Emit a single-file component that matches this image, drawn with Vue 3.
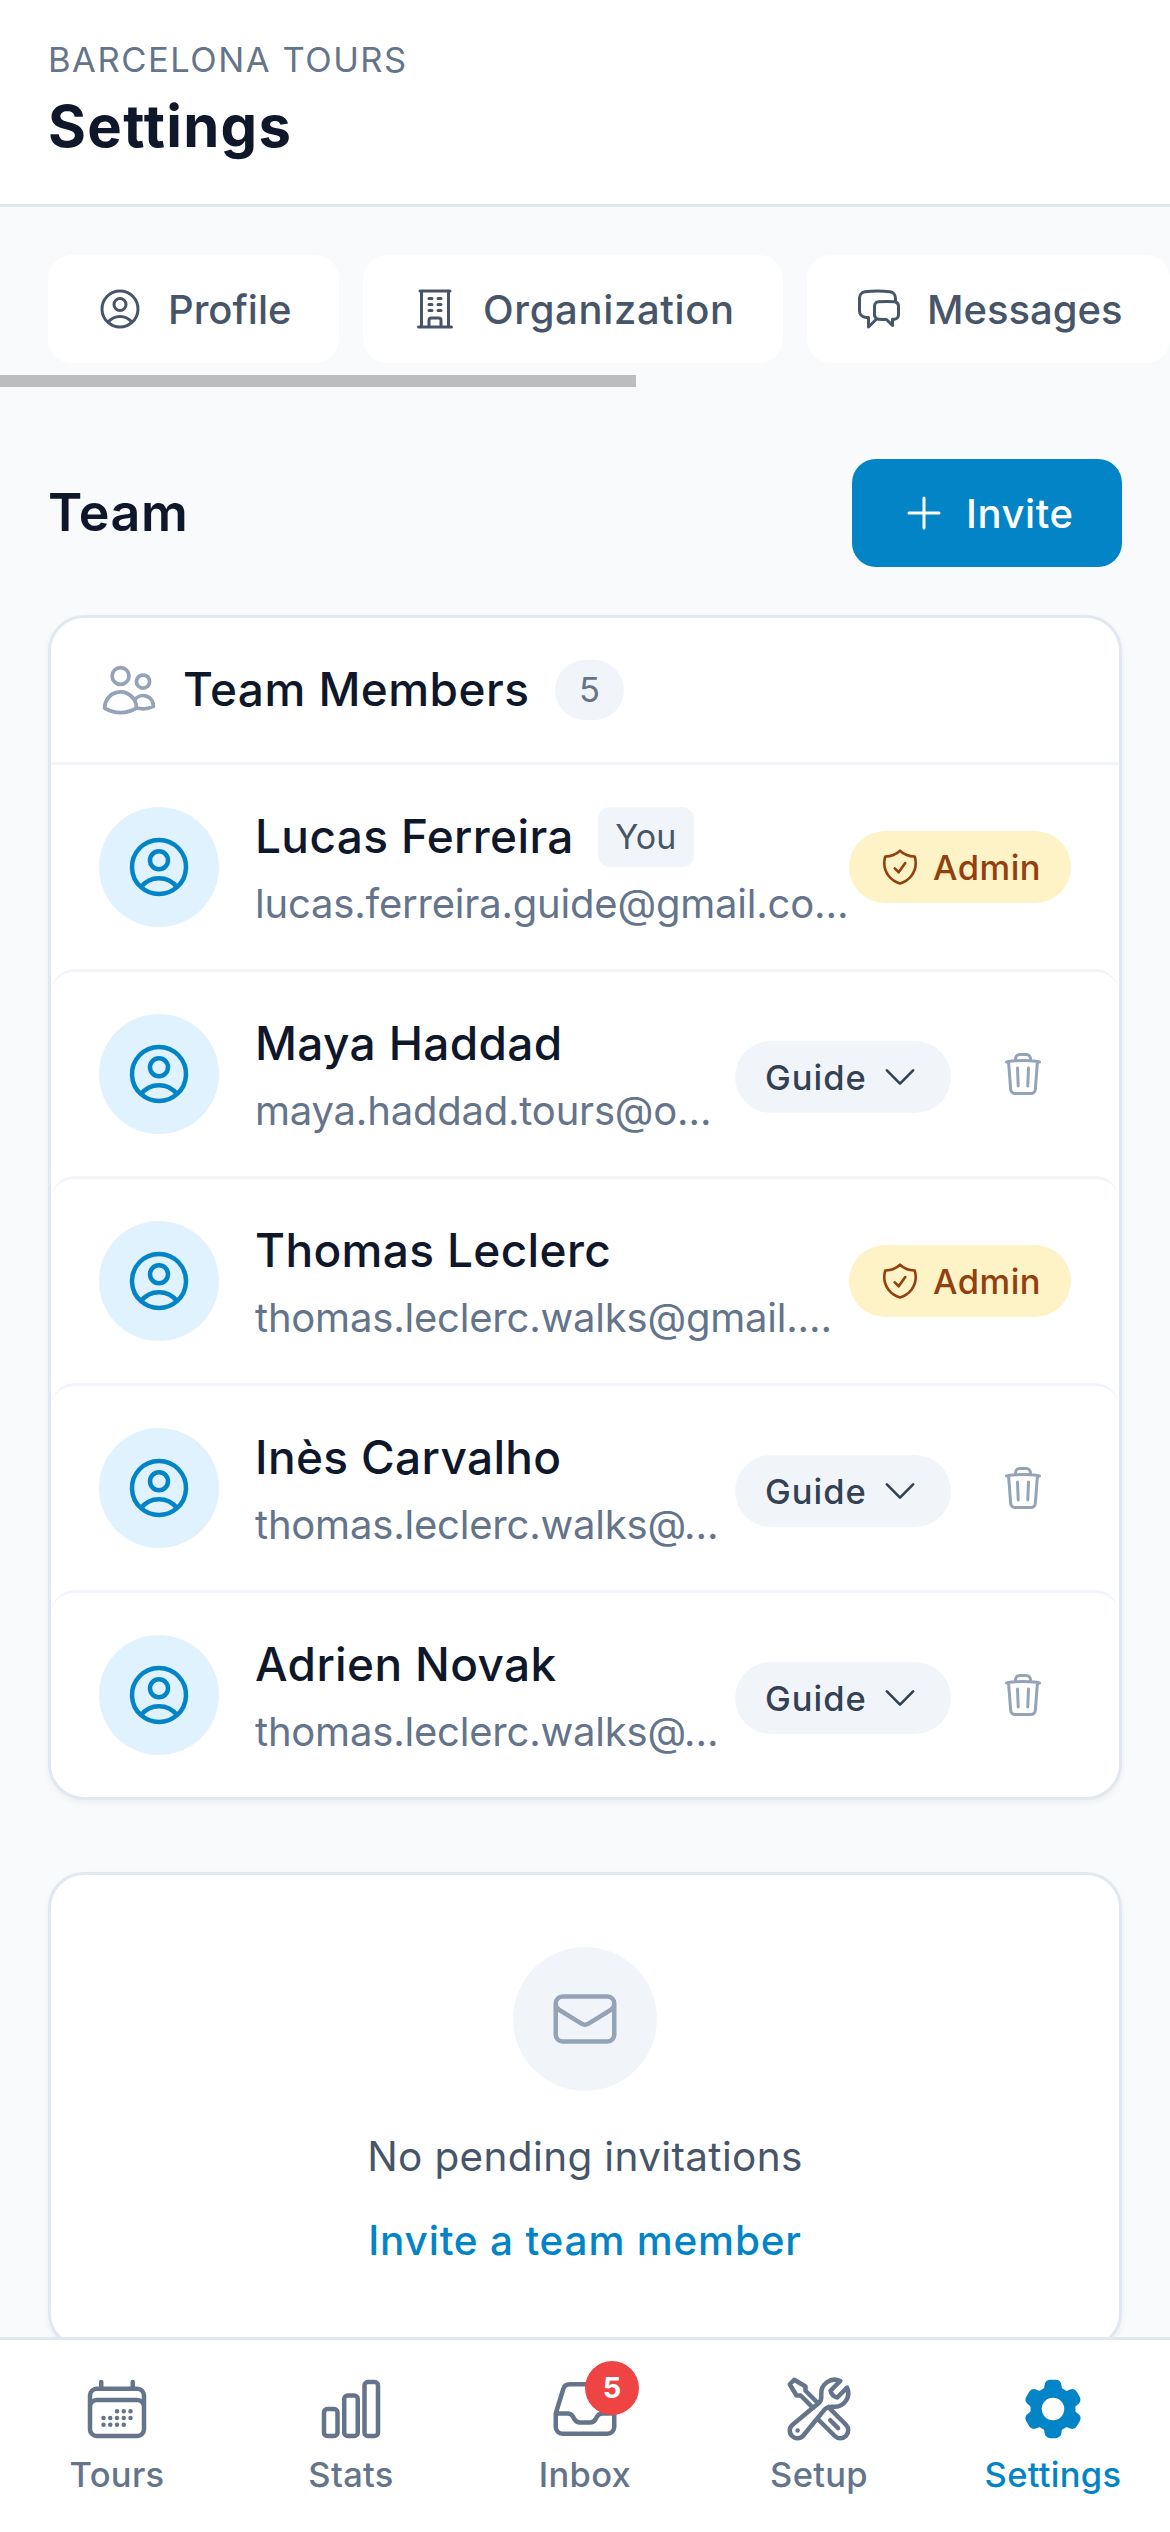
<script setup>
import { ref } from 'vue'

const icons = {
  user: 'M17.982 18.725A7.488 7.488 0 0 0 12 15.75a7.488 7.488 0 0 0-5.982 2.975m11.963 0a9 9 0 1 0-11.963 0m11.963 0A8.966 8.966 0 0 1 12 21a8.966 8.966 0 0 1-5.982-2.275M15 9.75a3 3 0 1 1-6 0 3 3 0 0 1 6 0Z',
  building: 'M3.75 21h16.5M4.5 3h15M5.25 3v18m13.5-18v18M9 6.75h1.5m-1.5 3h1.5m-1.5 3h1.5m3-6H15m-1.5 3H15m-1.5 3H15M9 21v-3.375c0-.621.504-1.125 1.125-1.125h3.75c.621 0 1.125.504 1.125 1.125V21',
  chat: 'M20.25 8.511c.884.284 1.5 1.128 1.5 2.097v4.286c0 1.136-.847 2.1-1.98 2.193-.34.027-.68.052-1.02.072v3.091l-3-3c-1.354 0-2.694-.055-4.02-.163a2.115 2.115 0 0 1-.825-.242m9.345-8.334a2.126 2.126 0 0 0-.476-.095 48.64 48.64 0 0 0-8.048 0c-1.131.094-1.976 1.057-1.976 2.192v4.286c0 .837.46 1.58 1.155 1.951m9.345-8.334V6.637c0-1.621-1.152-3.026-2.76-3.235A48.455 48.455 0 0 0 11.25 3c-2.115 0-4.198.137-6.24.402-1.608.209-2.76 1.614-2.76 3.235v6.226c0 1.621 1.152 3.026 2.76 3.235.577.075 1.157.14 1.74.194V21l4.155-4.155',
  plus: 'M12 4.5v15m7.5-7.5h-15',
  users: 'M15 19.128a9.38 9.38 0 0 0 2.625.372 9.337 9.337 0 0 0 4.121-.952 4.125 4.125 0 0 0-7.533-2.493M15 19.128v-.003c0-1.113-.285-2.16-.786-3.07M15 19.128v.106A12.318 12.318 0 0 1 8.624 21c-2.331 0-4.512-.645-6.374-1.766l-.001-.109a6.375 6.375 0 0 1 11.964-3.07M12 6.375a3.375 3.375 0 1 1-6.75 0 3.375 3.375 0 0 1 6.75 0Zm8.25 2.25a2.625 2.625 0 1 1-5.25 0 2.625 2.625 0 0 1 5.25 0Z',
  shield: 'M9 12.75 11.25 15 15 9.75m-3-7.036A11.959 11.959 0 0 1 3.598 6 11.99 11.99 0 0 0 3 9.749c0 5.592 3.824 10.29 9 11.623 5.176-1.332 9-6.03 9-11.622 0-1.31-.21-2.571-.598-3.751h-.152c-3.196 0-6.1-1.248-8.25-3.285Z',
  chevron: 'm19.5 8.25-7.5 7.5-7.5-7.5',
  trash: 'm14.74 9-.346 9m-4.788 0L9.26 9m9.968-3.21c.342.052.682.107 1.022.166m-1.022-.165L18.16 19.673a2.25 2.25 0 0 1-2.244 2.077H8.084a2.25 2.25 0 0 1-2.244-2.077L4.772 5.79m14.456 0a48.108 48.108 0 0 0-3.478-.397m-12 .562c.34-.059.68-.114 1.022-.165m0 0a48.11 48.11 0 0 1 3.478-.397m7.5 0v-.916c0-1.18-.91-2.164-2.09-2.201a51.964 51.964 0 0 0-3.32 0c-1.18.037-2.09 1.022-2.09 2.201v.916m7.5 0a48.667 48.667 0 0 0-7.5 0',
  envelope: 'M21.75 6.75v10.5a2.25 2.25 0 0 1-2.25 2.25h-15a2.25 2.25 0 0 1-2.25-2.25V6.75m19.5 0A2.25 2.25 0 0 0 19.5 4.5h-15a2.25 2.25 0 0 0-2.25 2.25m19.5 0v.243a2.25 2.25 0 0 1-1.07 1.916l-7.5 4.615a2.25 2.25 0 0 1-2.36 0L3.32 8.91a2.25 2.25 0 0 1-1.07-1.916V6.75',
  calendar: 'M6.75 3v2.25M17.25 3v2.25M3 18.75V7.5a2.25 2.25 0 0 1 2.25-2.25h13.5A2.25 2.25 0 0 1 21 7.5v11.25m-18 0A2.25 2.25 0 0 0 5.25 21h13.5A2.25 2.25 0 0 0 21 18.75m-18 0v-7.5A2.25 2.25 0 0 1 5.25 9h13.5A2.25 2.25 0 0 1 21 11.25v7.5m-9-6h.008v.008H12v-.008ZM12 15h.008v.008H12V15Zm0 2.25h.008v.008H12v-.008ZM9.75 15h.008v.008H9.75V15Zm0 2.25h.008v.008H9.75v-.008ZM7.5 15h.008v.008H7.5V15Zm0 2.25h.008v.008H7.5v-.008Zm6.75-4.5h.008v.008h-.008v-.008Zm0 2.25h.008v.008h-.008V15Zm0 2.25h.008v.008h-.008v-.008Zm2.25-4.5h.008v.008H16.5v-.008Zm0 2.25h.008v.008H16.5V15Z',
  chart: 'M3 13.125C3 12.504 3.504 12 4.125 12h2.25c.621 0 1.125.504 1.125 1.125v6.75C7.5 20.496 6.996 21 6.375 21h-2.25A1.125 1.125 0 0 1 3 19.875v-6.75ZM9.75 8.625c0-.621.504-1.125 1.125-1.125h2.25c.621 0 1.125.504 1.125 1.125v11.25c0 .621-.504 1.125-1.125 1.125h-2.25a1.125 1.125 0 0 1-1.125-1.125V8.625ZM16.5 4.125c0-.621.504-1.125 1.125-1.125h2.25C20.496 3 21 3.504 21 4.125v15.75c0 .621-.504 1.125-1.125 1.125h-2.25a1.125 1.125 0 0 1-1.125-1.125V4.125Z',
  inbox: 'M2.25 13.5h3.86a2.25 2.25 0 0 1 2.012 1.244l.256.512a2.25 2.25 0 0 0 2.013 1.244h3.218a2.25 2.25 0 0 0 2.013-1.244l.256-.512a2.25 2.25 0 0 1 2.013-1.244h3.859m-19.5.338V18a2.25 2.25 0 0 0 2.25 2.25h15A2.25 2.25 0 0 0 21.75 18v-4.162c0-.224-.034-.447-.1-.661L19.24 5.338a2.25 2.25 0 0 0-2.15-1.588H6.911a2.25 2.25 0 0 0-2.15 1.588L2.35 13.177a2.25 2.25 0 0 0-.1.661Z',
  tools: 'M11.42 15.17 17.25 21A2.652 2.652 0 0 0 21 17.25l-5.877-5.877M11.42 15.17l2.496-3.03c.317-.384.74-.626 1.208-.766M11.42 15.17l-4.655 5.653a2.548 2.548 0 1 1-3.586-3.586l6.837-5.63m5.108-.233c.55-.164 1.163-.188 1.743-.14a4.5 4.5 0 0 0 4.486-6.336l-3.276 3.277a3.004 3.004 0 0 1-2.25-2.25l3.276-3.276a4.5 4.5 0 0 0-6.336 4.486c.091 1.076-.071 2.264-.904 2.95l-.102.085m-1.745 1.437L5.909 7.5H4.5L2.25 3.75l1.5-1.5L7.5 4.5v1.409l4.26 4.26m-1.745 1.437 1.745-1.437m6.615 8.206L15.75 15.75M4.867 19.125h.008v.008h-.008v-.008Z',
  cog: 'M11.078 2.25c-.917 0-1.699.663-1.85 1.567L9.05 4.889c-.02.12-.115.26-.297.348a7.493 7.493 0 0 0-.986.57c-.166.115-.334.126-.45.083L6.3 5.508a1.875 1.875 0 0 0-2.282.819l-.922 1.597a1.875 1.875 0 0 0 .432 2.385l.84.692c.095.078.17.229.154.43a7.598 7.598 0 0 0 0 1.139c.015.2-.059.352-.153.43l-.841.692a1.875 1.875 0 0 0-.432 2.385l.922 1.597a1.875 1.875 0 0 0 2.282.818l1.019-.382c.115-.043.283-.031.45.082.312.214.641.405.985.57.182.088.277.228.297.35l.178 1.071c.151.904.933 1.567 1.85 1.567h1.844c.916 0 1.699-.663 1.85-1.567l.178-1.072c.02-.12.114-.26.297-.349.344-.165.673-.356.985-.57.167-.114.335-.125.45-.082l1.02.382a1.875 1.875 0 0 0 2.28-.819l.923-1.597a1.875 1.875 0 0 0-.432-2.385l-.84-.692c-.095-.078-.17-.229-.154-.43a7.614 7.614 0 0 0 0-1.139c-.016-.2.059-.352.153-.43l.84-.692c.708-.582.891-1.59.433-2.385l-.922-1.597a1.875 1.875 0 0 0-2.282-.818l-1.02.382c-.114.043-.282.031-.449-.083a7.49 7.49 0 0 0-.985-.57c-.183-.087-.277-.227-.297-.348l-.179-1.072a1.875 1.875 0 0 0-1.85-1.567h-1.843ZM12 15.75a3.75 3.75 0 1 0 0-7.5 3.75 3.75 0 0 0 0 7.5Z'
}

const tabs = [
  { label: 'Profile', icon: 'user' },
  { label: 'Organization', icon: 'building' },
  { label: 'Messages', icon: 'chat' }
]

const members = ref([
  { name: 'Lucas Ferreira', email: 'lucas.ferreira.guide@gmail.co…', role: 'Admin', you: true },
  { name: 'Maya Haddad', email: 'maya.haddad.tours@o…', role: 'Guide' },
  { name: 'Thomas Leclerc', email: 'thomas.leclerc.walks@gmail.…', role: 'Admin' },
  { name: 'Inès Carvalho', email: 'thomas.leclerc.walks@…', role: 'Guide' },
  { name: 'Adrien Novak', email: 'thomas.leclerc.walks@…', role: 'Guide' }
])

const nav = [
  { label: 'Tours', icon: 'calendar' },
  { label: 'Stats', icon: 'chart' },
  { label: 'Inbox', icon: 'inbox', count: 5 },
  { label: 'Setup', icon: 'tools' },
  { label: 'Settings', icon: 'cog', active: true }
]
</script>

<template>
  <div class="app">
    <header class="header">
      <div class="org">BARCELONA TOURS</div>
      <h1>Settings</h1>
    </header>

    <main class="main">
      <div class="tabs">
        <button v-for="tab in tabs" :key="tab.label" class="tab" :class="tab.icon">
          <svg class="icon" viewBox="0 0 24 24"><path :d="icons[tab.icon]" /></svg>
          <span>{{ tab.label }}</span>
        </button>
      </div>
      <div class="scrollbar"><div class="thumb"></div></div>

      <div class="title-row">
        <h2>Team</h2>
        <button class="invite">
          <svg class="icon" viewBox="0 0 24 24"><path :d="icons.plus" /></svg>
          <span>Invite</span>
        </button>
      </div>

      <section class="card">
        <div class="card-header">
          <svg class="icon" viewBox="0 0 24 24"><path :d="icons.users" /></svg>
          <h3>Team Members</h3>
          <span class="count">{{ members.length }}</span>
        </div>
        <div v-for="member in members" :key="member.name" class="member">
          <div class="avatar">
            <svg class="icon" viewBox="0 0 24 24"><path :d="icons.user" /></svg>
          </div>
          <div class="info">
            <div class="name">
              <span class="name-text">{{ member.name }}</span>
              <span v-if="member.you" class="you">You</span>
            </div>
            <div class="email">{{ member.email }}</div>
          </div>
          <div v-if="member.role === 'Admin'" class="role admin">
            <svg class="icon" viewBox="0 0 24 24"><path :d="icons.shield" /></svg>
            <span>Admin</span>
          </div>
          <template v-else>
            <button class="role guide">
              <span>Guide</span>
              <svg class="icon" viewBox="0 0 24 24"><path :d="icons.chevron" /></svg>
            </button>
            <button class="remove">
              <svg class="icon" viewBox="0 0 24 24"><path :d="icons.trash" /></svg>
            </button>
          </template>
        </div>
      </section>

      <section class="card pending">
        <div class="pending-icon">
          <svg class="icon" viewBox="0 0 24 24"><path :d="icons.envelope" /></svg>
        </div>
        <p>No pending invitations</p>
        <a>Invite a team member</a>
      </section>
    </main>

    <nav class="nav">
      <a v-for="item in nav" :key="item.label" class="nav-item" :class="{ active: item.active }">
        <div class="nav-icon">
          <svg class="icon" :class="{ solid: item.active }" viewBox="0 0 24 24">
            <path fill-rule="evenodd" :d="icons[item.icon]" />
          </svg>
          <span v-if="item.count" class="nav-badge">{{ item.count }}</span>
        </div>
        <span class="nav-label">{{ item.label }}</span>
      </a>
    </nav>
  </div>
</template>

<style>
body {
  margin: 0;
  background: #f8fafc;
}
</style>

<style scoped>
* {
  box-sizing: border-box;
}

.app {
  display: flex;
  flex-direction: column;
  width: 1170px;
  height: 2532px;
  overflow: hidden;
  background: #f8fafc;
  color: #0f172a;
  font-family: Inter, "Noto Sans", sans-serif;
}

h1, h2, h3, p {
  margin: 0;
}

button {
  border: 0;
  padding: 0;
  font: inherit;
  cursor: pointer;
}

span, h1, h2, h3, p, a, .email, .org {
  white-space: nowrap;
}

.icon {
  display: block;
  flex: none;
  width: 48px;
  height: 48px;
  fill: none;
  stroke: currentColor;
  stroke-width: 1.5;
  stroke-linecap: round;
  stroke-linejoin: round;
}

.icon.solid {
  fill: currentColor;
  stroke: none;
}

.header {
  flex: none;
  height: 207px;
  padding: 36px 48px 0;
  background: #fff;
  border-bottom: 3px solid #e2e8f0;
}

.org {
  font-size: 34.5px;
  line-height: 48px;
  letter-spacing: 1.55px;
  color: #64748b;
}

h1 {
  font-size: 58px;
  line-height: 84px;
  font-weight: 700;
  letter-spacing: 1.3px;
}

.main {
  flex: 1;
  min-height: 0;
  overflow: hidden;
}

.tabs {
  display: flex;
  gap: 24px;
  padding: 48px 0 12px 48px;
}

.tab {
  display: flex;
  flex: none;
  align-items: center;
  gap: 24px;
  height: 108px;
  padding-left: 48px;
  border-radius: 24px;
  background: #fff;
  color: #475569;
  font-size: 40px;
  font-weight: 500;
}

.tab.user {
  width: 291px;
}

.tab.building {
  width: 420px;
  letter-spacing: 0.65px;
}

.tab.chat {
  width: 363px;
}

.scrollbar {
  height: 12px;
}

.thumb {
  width: 636px;
  height: 12px;
  background: #bbbdbf;
}

.title-row {
  display: flex;
  align-items: center;
  justify-content: space-between;
  margin: 72px 48px 48px;
}

h2 {
  font-size: 52px;
  line-height: 84px;
  font-weight: 600;
  letter-spacing: 0.5px;
}

.invite {
  display: flex;
  align-items: center;
  gap: 18px;
  width: 270px;
  height: 108px;
  padding-left: 48px;
  border-radius: 24px;
  background: #0284c7;
  color: #fff;
  font-size: 40px;
  font-weight: 500;
  letter-spacing: 0.6px;
}

.card {
  margin: 0 48px;
  border: 3px solid #e2e8f0;
  border-radius: 36px;
  background: #fff;
  box-shadow: 0 3px 6px rgba(0, 0, 0, 0.05);
}

.card-header {
  display: flex;
  align-items: center;
  gap: 24px;
  height: 147px;
  padding: 0 48px;
  border-bottom: 3px solid #f1f5f9;
}

.card-header .icon {
  width: 60px;
  height: 60px;
  color: #94a3b8;
}

h3 {
  width: 348px;
  padding-bottom: 2px;
  font-size: 46px;
  line-height: 70px;
  font-weight: 500;
  letter-spacing: 0.45px;
}

.count {
  width: 69px;
  border-radius: 30px;
  background: #f1f5f9;
  color: #64748b;
  font-size: 34.5px;
  line-height: 60px;
  text-align: center;
}

.member {
  display: flex;
  align-items: center;
  height: 204px;
  padding: 0 48px;
}

.member + .member {
  height: 207px;
  border-top: 3px solid #f1f5f9;
  border-radius: 24px;
}

.avatar {
  display: flex;
  flex: none;
  align-items: center;
  justify-content: center;
  width: 120px;
  height: 120px;
  margin-right: 36px;
  border-radius: 50%;
  background: #e0f2fe;
  color: #0284c7;
}

.avatar .icon {
  width: 72px;
  height: 72px;
}

.info {
  flex: 1;
  min-width: 0;
}

.name {
  display: flex;
  align-items: center;
  gap: 24px;
  height: 72px;
  font-size: 46px;
  font-weight: 500;
}

.name-text {
  padding-bottom: 2px;
  letter-spacing: 0.35px;
}

.you {
  width: 96px;
  border-radius: 12px;
  background: #f1f5f9;
  color: #475569;
  font-size: 34px;
  font-weight: 400;
  line-height: 60px;
  text-align: center;
}

.email {
  padding-top: 1px;
  color: #64748b;
  font-size: 40px;
  line-height: 59px;
  letter-spacing: -0.2px;
}

.role {
  display: flex;
  flex: none;
  align-items: center;
  gap: 12px;
  height: 72px;
  padding: 0 30px;
  border-radius: 36px;
  font-size: 34.5px;
  font-weight: 500;
}

.role .icon {
  width: 42px;
  height: 42px;
}

.admin {
  width: 222px;
  background: #fef3c7;
  color: #92400e;
  letter-spacing: 0.5px;
}

.guide {
  justify-content: space-between;
  width: 216px;
  margin-top: 6px;
  background: #f1f5f9;
  color: #334155;
  letter-spacing: 1px;
}

.remove {
  display: flex;
  flex: none;
  align-items: center;
  justify-content: center;
  width: 96px;
  height: 96px;
  margin-left: 24px;
  background: none;
  color: #94a3b8;
}

.pending {
  display: flex;
  flex-direction: column;
  align-items: center;
  height: 477px;
  margin-top: 72px;
  padding-top: 72px;
}

.pending-icon {
  display: flex;
  align-items: center;
  justify-content: center;
  width: 144px;
  height: 144px;
  margin-bottom: 36px;
  border-radius: 50%;
  background: #f1f5f9;
  color: #94a3b8;
}

.pending-icon .icon {
  width: 72px;
  height: 72px;
}

.pending p {
  color: #475569;
  font-size: 40.5px;
  line-height: 60px;
  letter-spacing: 0.35px;
}

.pending a {
  margin-top: 24px;
  color: #0284c7;
  font-size: 40.5px;
  font-weight: 500;
  line-height: 60px;
  letter-spacing: 0.8px;
}

.nav {
  display: flex;
  flex: none;
  height: 195px;
  background: #fff;
  border-top: 3px solid #e2e8f0;
}

.nav-item {
  display: flex;
  flex: 1;
  flex-direction: column;
  align-items: center;
  justify-content: center;
  gap: 6px;
  color: #64748b;
}

.nav-item.active {
  color: #0284c7;
}

.nav-icon {
  position: relative;
}

.nav-icon .icon {
  width: 72px;
  height: 72px;
}

.nav-badge {
  position: absolute;
  top: -12px;
  right: -18px;
  width: 54px;
  height: 54px;
  border-radius: 50%;
  background: #ef4444;
  color: #fff;
  font-size: 29px;
  font-weight: 700;
  line-height: 54px;
  text-align: center;
}

.nav-label {
  font-size: 34.5px;
  font-weight: 500;
  line-height: 48px;
  letter-spacing: 0.3px;
}
</style>
